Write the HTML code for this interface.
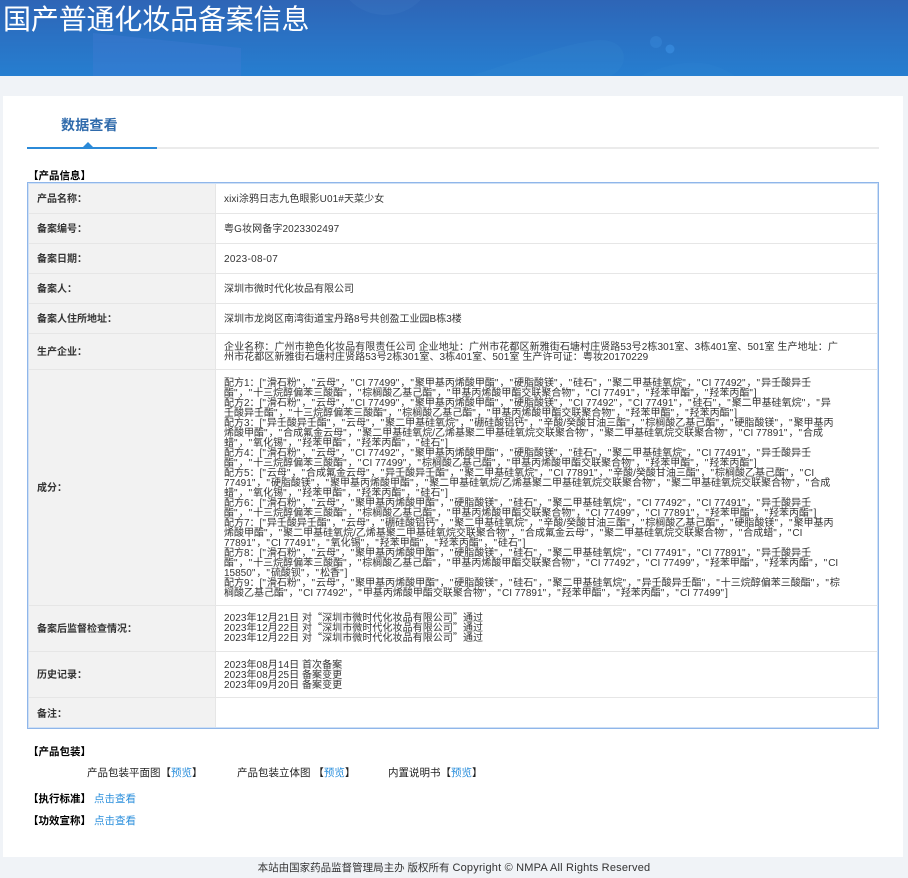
<!DOCTYPE html>
<html lang="zh-CN"><head><meta charset="utf-8"><title>国产普通化妆品备案信息</title>
<style>
*{box-sizing:border-box;margin:0;padding:0}
html,body{width:908px;height:878px;overflow:hidden;background:#f0f3f7}
body{position:relative;font-family:"Liberation Sans","Noto Sans CJK SC",sans-serif;font-size:10px;color:#333}
.a{position:absolute;white-space:nowrap}
#hd{left:0;top:0;width:908px;height:76px;background:linear-gradient(180deg,#2e65b6 0%,#2a72c4 50%,#267ed0 100%);overflow:hidden}
#panel{left:3px;top:96px;width:900px;height:761px;background:#fff}
.lab{left:28px;width:188px;background:#f2f2f2;border-bottom:1px solid #e6e6e6;border-right:1px solid #e6e6e6;font-weight:700;color:#333;padding-left:9px;padding-bottom:2px;display:flex;align-items:center;font-size:10px}
.val{left:216px;width:662px;border-bottom:1px solid #e6e6e6;padding-left:8px;padding-top:2px;display:flex;align-items:center;color:#333;line-height:10px}
.b{font-weight:700;color:#000}
.l{color:#2b8fdc}
i{font-style:normal;letter-spacing:1px}
u{text-decoration:none;font-family:"Noto Sans CJK SC",sans-serif;line-height:0}
</style></head><body>
<div class="a" id="hd">
<svg width="908" height="76" style="position:absolute;left:0;top:0">
<path d="M93 33 L241 48 V76 H93Z" fill="#4a7fd8" opacity=".3"/>
<circle cx="385" cy="-35" r="50" fill="#5a94d8" opacity=".12"/>
<path d="M470 76 C520 60 570 42 600 40 C630 40 630 68 610 76Z" fill="#3f95d6" opacity=".14"/>
<circle cx="656" cy="42" r="6" fill="#3f8fe0" opacity=".35"/>
<circle cx="670" cy="49" r="4.5" fill="#3f96ea" opacity=".5"/>
<path d="M640 76 C680 58 710 58 735 76Z" fill="#3f95d6" opacity=".1"/>
</svg>
<div class="a" style="left:3px;top:1px;font-size:28px;line-height:38px;color:#fff;letter-spacing:-.15px">国产普通化妆品备案信息</div>
</div>
<div class="a" id="panel"></div>
<div class="a" style="left:27px;top:147px;width:852px;height:2px;background:#ebebeb"></div>
<div class="a" style="left:27px;top:147px;width:130px;height:2px;background:#2b8ad8"></div>
<div class="a" style="left:83px;top:142px;width:0;height:0;border-left:5px solid transparent;border-right:5px solid transparent;border-bottom:5px solid #2b8ad8"></div>
<div class="a" style="left:61px;top:115px;font-size:14px;line-height:20px;color:#2f6aab;font-weight:700;letter-spacing:.2px">数据查看</div>
<div class="a b" style="left:28px;top:170px;line-height:12px;font-size:10.5px">【产品信息】</div>

<div class="a lab" style="top:184px;height:30px">产品名称：</div><div class="a val" style="top:184px;height:30px;letter-spacing:.1px">xixi涂鸦日志九色眼影U01#天菜少女</div>
<div class="a lab" style="top:214px;height:30px">备案编号：</div><div class="a val" style="top:214px;height:30px;letter-spacing:.12px">粤G妆网备字2023302497</div>
<div class="a lab" style="top:244px;height:30px">备案日期：</div><div class="a val" style="top:244px;height:30px;letter-spacing:.3px">2023-08-07</div>
<div class="a lab" style="top:274px;height:30px">备案人：</div><div class="a val" style="top:274px;height:30px">深圳市微时代化妆品有限公司</div>
<div class="a lab" style="top:304px;height:30px">备案人住所地址：</div><div class="a val" style="top:304px;height:30px">深圳市龙岗区南湾街道宝丹路8号共创盈工业园B栋3楼</div>
<div class="a lab" style="top:334px;height:36px">生产企业：</div><div class="a val" style="top:334px;height:36px;letter-spacing:.09px"><div>企业名称：广州市艳色化妆品有限责任公司 企业地址：广州市花都区新雅街石塘村庄贤路53号2栋301室、3栋401室、501室 生产地址：广<br>州市花都区新雅街石塘村庄贤路53号2栋301室、3栋401室、501室 生产许可证：粤妆20170229</div></div>
<div class="a lab" style="top:370px;height:236px">成分：</div><div class="a val" style="top:370px;height:236px"><div>配方1：[<i>"</i>滑石粉<i>"</i>，<i>"</i>云母<i>"</i>，<i>"</i>CI 77499<i>"</i>，<i>"</i>聚甲基丙烯酸甲酯<i>"</i>，<i>"</i>硬脂酸镁<i>"</i>，<i>"</i>硅石<i>"</i>，<i>"</i>聚二甲基硅氧烷<i>"</i>，<i>"</i>CI 77492<i>"</i>，<i>"</i>异壬酸异壬<br>
酯<i>"</i>，<i>"</i>十三烷醇偏苯三酸酯<i>"</i>，<i>"</i>棕榈酸乙基己酯<i>"</i>，<i>"</i>甲基丙烯酸甲酯交联聚合物<i>"</i>，<i>"</i>CI 77491<i>"</i>，<i>"</i>羟苯甲酯<i>"</i>，<i>"</i>羟苯丙酯<i>"</i>]<br>
配方2：[<i>"</i>滑石粉<i>"</i>，<i>"</i>云母<i>"</i>，<i>"</i>CI 77499<i>"</i>，<i>"</i>聚甲基丙烯酸甲酯<i>"</i>，<i>"</i>硬脂酸镁<i>"</i>，<i>"</i>CI 77492<i>"</i>，<i>"</i>CI 77491<i>"</i>，<i>"</i>硅石<i>"</i>，<i>"</i>聚二甲基硅氧烷<i>"</i>，<i>"</i>异<br>
壬酸异壬酯<i>"</i>，<i>"</i>十三烷醇偏苯三酸酯<i>"</i>，<i>"</i>棕榈酸乙基己酯<i>"</i>，<i>"</i>甲基丙烯酸甲酯交联聚合物<i>"</i>，<i>"</i>羟苯甲酯<i>"</i>，<i>"</i>羟苯丙酯<i>"</i>]<br>
配方3：[<i>"</i>异壬酸异壬酯<i>"</i>，<i>"</i>云母<i>"</i>，<i>"</i>聚二甲基硅氧烷<i>"</i>，<i>"</i>硼硅酸铝钙<i>"</i>，<i>"</i>辛酸/癸酸甘油三酯<i>"</i>，<i>"</i>棕榈酸乙基己酯<i>"</i>，<i>"</i>硬脂酸镁<i>"</i>，<i>"</i>聚甲基丙<br>
烯酸甲酯<i>"</i>，<i>"</i>合成氟金云母<i>"</i>，<i>"</i>聚二甲基硅氧烷/乙烯基聚二甲基硅氧烷交联聚合物<i>"</i>，<i>"</i>聚二甲基硅氧烷交联聚合物<i>"</i>，<i>"</i>CI 77891<i>"</i>，<i>"</i>合成<br>
蜡<i>"</i>，<i>"</i>氧化锡<i>"</i>，<i>"</i>羟苯甲酯<i>"</i>，<i>"</i>羟苯丙酯<i>"</i>，<i>"</i>硅石<i>"</i>]<br>
配方4：[<i>"</i>滑石粉<i>"</i>，<i>"</i>云母<i>"</i>，<i>"</i>CI 77492<i>"</i>，<i>"</i>聚甲基丙烯酸甲酯<i>"</i>，<i>"</i>硬脂酸镁<i>"</i>，<i>"</i>硅石<i>"</i>，<i>"</i>聚二甲基硅氧烷<i>"</i>，<i>"</i>CI 77491<i>"</i>，<i>"</i>异壬酸异壬<br>
酯<i>"</i>，<i>"</i>十三烷醇偏苯三酸酯<i>"</i>，<i>"</i>CI 77499<i>"</i>，<i>"</i>棕榈酸乙基己酯<i>"</i>，<i>"</i>甲基丙烯酸甲酯交联聚合物<i>"</i>，<i>"</i>羟苯甲酯<i>"</i>，<i>"</i>羟苯丙酯<i>"</i>]<br>
配方5：[<i>"</i>云母<i>"</i>，<i>"</i>合成氟金云母<i>"</i>，<i>"</i>异壬酸异壬酯<i>"</i>，<i>"</i>聚二甲基硅氧烷<i>"</i>，<i>"</i>CI 77891<i>"</i>，<i>"</i>辛酸/癸酸甘油三酯<i>"</i>，<i>"</i>棕榈酸乙基己酯<i>"</i>，<i>"</i>CI<br>
77491<i>"</i>，<i>"</i>硬脂酸镁<i>"</i>，<i>"</i>聚甲基丙烯酸甲酯<i>"</i>，<i>"</i>聚二甲基硅氧烷/乙烯基聚二甲基硅氧烷交联聚合物<i>"</i>，<i>"</i>聚二甲基硅氧烷交联聚合物<i>"</i>，<i>"</i>合成<br>
蜡<i>"</i>，<i>"</i>氧化锡<i>"</i>，<i>"</i>羟苯甲酯<i>"</i>，<i>"</i>羟苯丙酯<i>"</i>，<i>"</i>硅石<i>"</i>]<br>
配方6：[<i>"</i>滑石粉<i>"</i>，<i>"</i>云母<i>"</i>，<i>"</i>聚甲基丙烯酸甲酯<i>"</i>，<i>"</i>硬脂酸镁<i>"</i>，<i>"</i>硅石<i>"</i>，<i>"</i>聚二甲基硅氧烷<i>"</i>，<i>"</i>CI 77492<i>"</i>，<i>"</i>CI 77491<i>"</i>，<i>"</i>异壬酸异壬<br>
酯<i>"</i>，<i>"</i>十三烷醇偏苯三酸酯<i>"</i>，<i>"</i>棕榈酸乙基己酯<i>"</i>，<i>"</i>甲基丙烯酸甲酯交联聚合物<i>"</i>，<i>"</i>CI 77499<i>"</i>，<i>"</i>CI 77891<i>"</i>，<i>"</i>羟苯甲酯<i>"</i>，<i>"</i>羟苯丙酯<i>"</i>]<br>
配方7：[<i>"</i>异壬酸异壬酯<i>"</i>，<i>"</i>云母<i>"</i>，<i>"</i>硼硅酸铝钙<i>"</i>，<i>"</i>聚二甲基硅氧烷<i>"</i>，<i>"</i>辛酸/癸酸甘油三酯<i>"</i>，<i>"</i>棕榈酸乙基己酯<i>"</i>，<i>"</i>硬脂酸镁<i>"</i>，<i>"</i>聚甲基丙<br>
烯酸甲酯<i>"</i>，<i>"</i>聚二甲基硅氧烷/乙烯基聚二甲基硅氧烷交联聚合物<i>"</i>，<i>"</i>合成氟金云母<i>"</i>，<i>"</i>聚二甲基硅氧烷交联聚合物<i>"</i>，<i>"</i>合成蜡<i>"</i>，<i>"</i>CI<br>
77891<i>"</i>，<i>"</i>CI 77491<i>"</i>，<i>"</i>氧化锡<i>"</i>，<i>"</i>羟苯甲酯<i>"</i>，<i>"</i>羟苯丙酯<i>"</i>，<i>"</i>硅石<i>"</i>]<br>
配方8：[<i>"</i>滑石粉<i>"</i>，<i>"</i>云母<i>"</i>，<i>"</i>聚甲基丙烯酸甲酯<i>"</i>，<i>"</i>硬脂酸镁<i>"</i>，<i>"</i>硅石<i>"</i>，<i>"</i>聚二甲基硅氧烷<i>"</i>，<i>"</i>CI 77491<i>"</i>，<i>"</i>CI 77891<i>"</i>，<i>"</i>异壬酸异壬<br>
酯<i>"</i>，<i>"</i>十三烷醇偏苯三酸酯<i>"</i>，<i>"</i>棕榈酸乙基己酯<i>"</i>，<i>"</i>甲基丙烯酸甲酯交联聚合物<i>"</i>，<i>"</i>CI 77492<i>"</i>，<i>"</i>CI 77499<i>"</i>，<i>"</i>羟苯甲酯<i>"</i>，<i>"</i>羟苯丙酯<i>"</i>，<i>"</i>CI<br>
15850<i>"</i>，<i>"</i>硫酸钡<i>"</i>，<i>"</i>松香<i>"</i>]<br>
配方9：[<i>"</i>滑石粉<i>"</i>，<i>"</i>云母<i>"</i>，<i>"</i>聚甲基丙烯酸甲酯<i>"</i>，<i>"</i>硬脂酸镁<i>"</i>，<i>"</i>硅石<i>"</i>，<i>"</i>聚二甲基硅氧烷<i>"</i>，<i>"</i>异壬酸异壬酯<i>"</i>，<i>"</i>十三烷醇偏苯三酸酯<i>"</i>，<i>"</i>棕<br>
榈酸乙基己酯<i>"</i>，<i>"</i>CI 77492<i>"</i>，<i>"</i>甲基丙烯酸甲酯交联聚合物<i>"</i>，<i>"</i>CI 77891<i>"</i>，<i>"</i>羟苯甲酯<i>"</i>，<i>"</i>羟苯丙酯<i>"</i>，<i>"</i>CI 77499<i>"</i>]</div></div>
<div class="a lab" style="top:606px;height:46px">备案后监督检查情况：</div><div class="a val" style="top:606px;height:46px;letter-spacing:.06px;padding-top:1px"><div>2023年12月21日 对<u>“</u>深圳市微时代化妆品有限公司<u>”</u>通过<br>2023年12月22日 对<u>“</u>深圳市微时代化妆品有限公司<u>”</u>通过<br>2023年12月22日 对<u>“</u>深圳市微时代化妆品有限公司<u>”</u>通过</div></div>
<div class="a lab" style="top:652px;height:46px">历史记录：</div><div class="a val" style="top:652px;height:46px;letter-spacing:.06px"><div>2023年08月14日 首次备案<br>2023年08月25日 备案变更<br>2023年09月20日 备案变更</div></div>
<div class="a lab" style="top:698px;height:30px;border-bottom:0">备注：</div><div class="a val" style="top:698px;height:30px;border-bottom:0"></div>
<div class="a" style="left:27px;top:182px;width:852px;height:547px;border:1px solid #8fb6ea;box-shadow:inset 0 0 0 1px #cfe0f5"></div>

<div class="a b" style="left:28px;top:746px;line-height:12px;font-size:10.5px">【产品包装】</div>
<div class="a" style="left:87px;top:767px;line-height:12px;color:#222;font-size:10.5px">产品包装平面图【<span class="l">预览</span>】</div>
<div class="a" style="left:237px;top:767px;line-height:12px;color:#222;font-size:10.5px">产品包装立体图&nbsp;【<span class="l">预览</span>】</div>
<div class="a" style="left:388px;top:767px;line-height:12px;color:#222;font-size:10.5px">内置说明书【<span class="l">预览</span>】</div>
<div class="a b" style="left:28px;top:793px;line-height:12px;font-size:10.5px">【执行标准】</div>
<div class="a l" style="left:94px;top:793px;line-height:12px;font-size:10.5px">点击查看</div>
<div class="a b" style="left:28px;top:815px;line-height:12px;font-size:10.5px">【功效宣称】</div>
<div class="a l" style="left:94px;top:815px;line-height:12px;font-size:10.5px">点击查看</div>
<div class="a" style="left:0;top:861px;width:908px;text-align:center;font-size:10.5px;line-height:14px;color:#333">本站由国家药品监督管理局主办 版权所有 <span style="font-size:11px;letter-spacing:.2px">Copyright © NMPA All Rights Reserved</span></div>
</body></html>
